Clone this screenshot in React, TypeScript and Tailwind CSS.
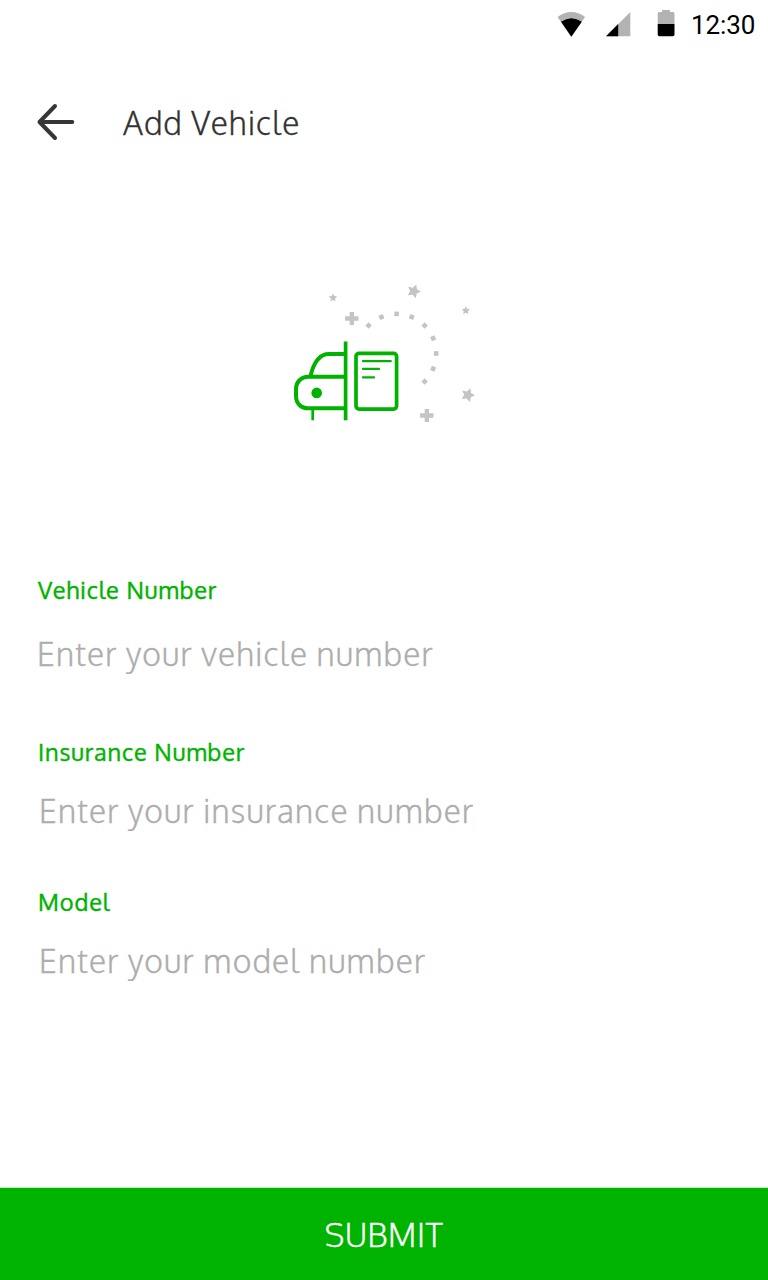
import React from "react";

const UI = "font-['Oxygen','Open_Sans','Noto_Sans',sans-serif]";

function starPoints(cx: number, cy: number, r: number, turn: number): string {
  return Array.from({ length: 10 }, (_, i) => {
    const radius = i % 2 === 0 ? r : r * 0.52;
    const a = ((i * 36 - 90 + turn) * Math.PI) / 180;
    return `${(cx + radius * Math.cos(a)).toFixed(2)},${(cy + radius * Math.sin(a)).toFixed(2)}`;
  }).join(" ");
}

function StatusBar() {
  return (
    <div className="flex h-[50px] shrink-0 items-center justify-end pr-[13px]">
      <svg className="h-[50px] w-[120px]" viewBox="556 0 120 50" aria-hidden="true">
        <path d="M571.3 36.7 557.5 17.1Q571.3 7.1 585.1 17.1Z" fill="#b3b3b3" />
        <path d="M571.3 36.7 561 21.8Q571.3 14.6 581.8 21.8Z" fill="#000" />
        <path d="M606 36.2 630.3 12V36.2Z" fill="#b3b3b3" />
        <path d="M606 36.2 618.2 24V36.2Z" fill="#000" />
        <path d="M662 10h8v2h3q1.5 0 1.5 1.5V24h-16.8V13.5q0-1.5 1.5-1.5H662Z" fill="#b3b3b3" />
        <path d="M657.7 24h16.8v10.5q0 1.7-1.7 1.7h-13.4q-1.7 0-1.7-1.7Z" fill="#000" />
      </svg>
      <span className="ml-[15px] w-[64px] whitespace-nowrap font-['Roboto',sans-serif] text-[26px] leading-[50px] tracking-[-0.1px] text-black">
        12:30
      </span>
    </div>
  );
}

function Illustration() {
  return (
    <svg className="ml-[285px] h-[155px] w-[200px]" viewBox="285 275 200 155" aria-hidden="true">
      <g fill="#c4c4c4">
        {[-135, -112.5, -90, -67.5, -45, -22.5, 0, 22.5, 45].map((a) => (
          <rect key={a} x="433.9" y="351.2" width="4.6" height="4.6" transform={`rotate(${a} 396.6 353.5)`} />
        ))}
        <polygon points={starPoints(333, 297.7, 4.3, 0)} />
        <polygon points={starPoints(413.8, 291.3, 7.2, 20)} />
        <polygon points={starPoints(465.8, 310.5, 4.3, 0)} />
        <polygon points={starPoints(467.9, 395, 7.2, 20)} />
        <path d="M349.7 312h4.3v4.3h4.5v4.5h-4.5v4.2h-4.3v-4.2h-4.6v-4.5h4.6Z" />
        <path d="M424.7 409h4.3v4.3h4.5v4.5h-4.5v4.2h-4.3v-4.2h-4.6v-4.5h4.6Z" />
      </g>
      <g fill="none" stroke="#00b300" strokeWidth="3.7">
        <path d="M345.6 341.5V420.3" />
        <path d="M345.6 353.9H329C319 353.9 313.5 363 310.5 376" strokeWidth="4" />
        <path d="M345.6 376.7H308.5C301 376.7 296 382 296 389V396C296 403.5 301 408.3 308.5 408.3H345.6" strokeWidth="4" />
        <path d="M312.7 408V420.3" strokeWidth="2.7" />
        <rect x="356" y="353.4" width="40.6" height="55.7" rx="3" />
        <path d="M363 361.2H390.7M363 368.9H379M363 377.4H374" strokeWidth="2.3" strokeLinecap="round" />
      </g>
      <circle cx="316.7" cy="392.9" r="5.3" fill="#00b300" />
    </svg>
  );
}

type FieldProps = {
  id: string;
  label: string;
  placeholder: string;
  className: string;
  inputClass: string;
};

function Field({ id, label, placeholder, className, inputClass }: FieldProps) {
  return (
    <div className={`flex flex-col items-start ${className}`}>
      <label
        htmlFor={id}
        className="pl-[1px] text-[23.5px] leading-[32px] font-normal tracking-[0.88px] whitespace-nowrap text-[#00b300] [-webkit-text-stroke:0.4px_#00b300]"
      >
        {label}
      </label>
      <input
        id={id}
        type="text"
        placeholder={placeholder}
        className={`h-[48px] w-[600px] bg-transparent text-[32px] leading-[48px] font-light tracking-[1.17px] text-gray-900 outline-none placeholder:text-[#adadad] placeholder:opacity-100 placeholder:[-webkit-text-stroke:0.3px_#adadad] ${inputClass}`}
      />
    </div>
  );
}

export default function App() {
  return (
    <main className={`flex h-[1280px] w-[768px] flex-col overflow-hidden bg-white ${UI}`}>
      <StatusBar />
      <header className="flex h-[143px] shrink-0 items-center pl-[36px]">
        <button type="button" aria-label="Back" className="h-[40px] w-[40px]">
          <svg viewBox="36 102 40 40" className="h-[40px] w-[40px]" fill="none" stroke="#363636" strokeWidth="4" strokeLinecap="round" strokeLinejoin="round">
            <path d="M55 106 39.5 122 55 138M39.5 122H72.3" />
          </svg>
        </button>
        <h1 className="ml-[47px] pt-[2px] whitespace-nowrap text-[32px] font-light leading-[48px] tracking-[1.1px] text-[#333333] [-webkit-text-stroke:0.3px_#333333]">
          Add Vehicle
        </h1>
      </header>
      <div className="mt-[82px] h-[155px] shrink-0">
        <Illustration />
      </div>
      <form className="flex flex-1 flex-col pl-[37px] pt-[144px]">
        <Field id="vehicle" label="Vehicle Number" placeholder="Enter your vehicle number" className="h-[162px] gap-[24px]" inputClass="" />
        <Field id="insurance" label="Insurance Number" placeholder="Enter your insurance number" className="h-[150px] gap-[19px]" inputClass="pl-[2px]" />
        <Field id="model" label="Model" placeholder="Enter your model number" className="gap-[19px]" inputClass="pl-[2px]" />
      </form>
      <button
        type="submit"
        className="flex h-[93px] shrink-0 items-center justify-center border-t border-[#c4ecc4] bg-[#00b300] pt-[1px] text-[32px] font-light tracking-[0.7px] text-white [-webkit-text-stroke:0.3px_#ffffff]"
      >
        SUBMIT
      </button>
    </main>
  );
}
